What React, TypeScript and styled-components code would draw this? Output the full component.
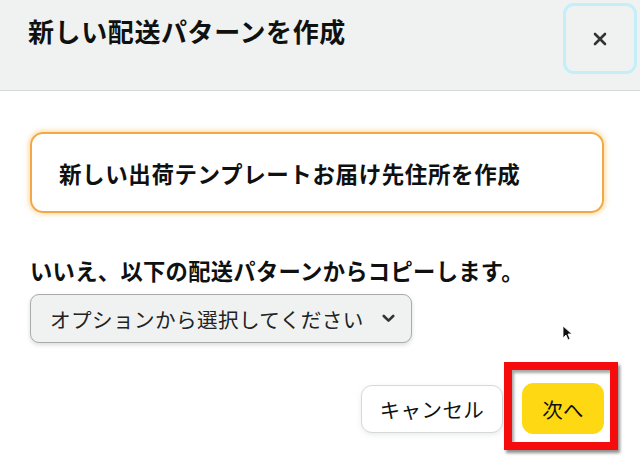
import React from "react";
import styled, { createGlobalStyle } from "styled-components";

const GlobalStyle = createGlobalStyle`
  html, body {
    margin: 0;
    padding: 0;
    background: #fff;
  }
  body {
    font-family: "Noto Sans CJK JP", "Noto Sans", sans-serif;
    color: #0f1111;
  }
`;

const Modal = styled.div`
  width: 640px;
  height: 467px;
  background: #fff;
  overflow: hidden;
`;

const Header = styled.div`
  height: 90px;
  background: #f0f2f2;
  border-bottom: 1px solid #d5d9d9;
  display: flex;
  justify-content: space-between;
  align-items: flex-start;
  padding: 0 3px 0 28px;
`;

const Title = styled.h1`
  margin: 14px 0 0;
  font-size: 26px;
  line-height: 34px;
  font-weight: 700;
  letter-spacing: 0.6px;
`;

const CloseButton = styled.button`
  margin-top: 3px;
  width: 74px;
  height: 71px;
  border: 3px solid #c4eff9;
  border-radius: 11px;
  background: #f0f2f2;
  display: flex;
  align-items: center;
  justify-content: center;
  padding: 0;
`;

const Body = styled.div`
  position: relative;
  padding: 41px 36px 0 30px;
`;

const OptionCard = styled.div`
  height: 81px;
  box-sizing: border-box;
  border: 2px solid #f3a847;
  border-radius: 13px;
  box-shadow: 0 0 4px 2px rgba(245, 166, 35, 0.35);
  display: flex;
  align-items: center;
  padding: 0 0 0 27px;
  font-size: 22.5px;
  font-weight: 700;
  letter-spacing: 0.6px;
`;

const Label = styled.div`
  margin-top: 42px;
  font-size: 22.3px;
  line-height: 30px;
  font-weight: 700;
  letter-spacing: 0.3px;
`;

const Select = styled.div`
  margin-top: 9px;
  width: 382px;
  height: 49px;
  box-sizing: border-box;
  background: #f0f2f2;
  border: 1px solid #a8acac;
  border-radius: 9px;
  box-shadow: 0 2px 4px rgba(15, 17, 17, 0.15);
  display: flex;
  align-items: center;
  justify-content: space-between;
  padding: 0 16px 0 19px;
  font-size: 20.6px;
  color: #222;
  letter-spacing: 0.4px;
`;

const Footer = styled.div`
  margin-top: 40px;
  display: flex;
  justify-content: flex-end;
  align-items: center;
  gap: 19px;
`;

interface ButtonProps {
  primary?: boolean;
}

const Button = styled.button<ButtonProps>`
  position: relative;
  height: ${(p) => (p.primary ? "51px" : "48px")};
  padding: ${(p) => (p.primary ? "0 19px" : "0 18px")};
  border-radius: 11px;
  border: 1px solid ${(p) => (p.primary ? "#ffd814" : "#d5d9d9")};
  background: ${(p) => (p.primary ? "#ffd814" : "#fff")};
  box-shadow: ${(p) => (p.primary ? "none" : "0 2px 5px rgba(213, 217, 217, 0.5)")};
  font-family: "Noto Sans CJK JP", sans-serif;
  font-size: 20.5px;
  color: #0f1111;
  letter-spacing: 0.4px;
`;

const Highlight = styled.div`
  position: absolute;
  left: -19px;
  top: -22px;
  width: 114px;
  height: 88px;
  box-sizing: border-box;
  border: 8px solid #f50d0d;
  box-shadow: 2px 3px 3px rgba(0, 0, 0, 0.45), inset 2px 3px 3px rgba(0, 0, 0, 0.35);
  pointer-events: none;
`;

const Cursor = styled.svg`
  position: absolute;
  left: 562px;
  top: 234px;
`;

export default function App() {
  return (
    <>
      <GlobalStyle />
      <Modal>
        <Header>
          <Title>新しい配送パターンを作成</Title>
          <CloseButton aria-label="閉じる">
            <svg width="14" height="14" viewBox="0 0 14 14">
              <path d="M2 2L12 12M12 2L2 12" stroke="#333" strokeWidth="2.6" strokeLinecap="round" />
            </svg>
          </CloseButton>
        </Header>
        <Body>
          <OptionCard>新しい出荷テンプレートお届け先住所を作成</OptionCard>
          <Label>いいえ、以下の配送パターンからコピーします。</Label>
          <Select>
            <span>オプションから選択してください</span>
            <svg width="13" height="9" viewBox="0 0 13 9">
              <path d="M1.8 2L6.5 6.6L11.2 2" fill="none" stroke="#333" strokeWidth="2.6" strokeLinecap="round" strokeLinejoin="round" />
            </svg>
          </Select>
          <Footer>
            <Button>キャンセル</Button>
            <Button primary>
              次へ
              <Highlight />
            </Button>
          </Footer>
          <Cursor width="10" height="16" viewBox="0 0 10 16">
            <path d="M1 1L1 13L4 10L6 15L8 14L6 9L10 9Z" fill="#111" stroke="#fff" strokeWidth="0.8" />
          </Cursor>
        </Body>
      </Modal>
    </>
  );
}
